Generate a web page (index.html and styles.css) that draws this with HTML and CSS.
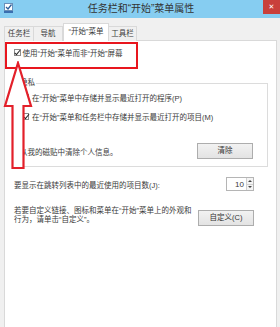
FILE: index.html
```html
<!DOCTYPE html>
<html lang="zh-CN">
<head>
<meta charset="utf-8">
<link rel="stylesheet" href="styles.css">
</head>
<body>
<div class="window">
  <div class="titlebar">
    <svg class="app-icon" width="9" height="10" viewBox="0 0 9 10">
      <rect x="0.5" y="0.5" width="8" height="7" fill="#fff" stroke="#6a8fb8"/>
      <path d="M2 4 L4 6 L7.5 1.5" fill="none" stroke="#2c5e9a" stroke-width="1.3"/>
      <rect x="0" y="8" width="9" height="2" fill="#3a6fb0"/>
    </svg>
    <div class="title">任务栏和“开始”菜单属性</div>
    <div class="close">✕</div>
  </div>
  <div class="content">
    <div class="tabs">
      <div class="tab t1">任务栏</div>
      <div class="tab t2">导航</div>
      <div class="tab active">“开始”菜单</div>
      <div class="tab t4">工具栏</div>
    </div>
    <div class="panel">
      <div class="highlight">
        <div class="check-row"><span class="cb checked"></span><span>使用“开始”菜单而非“开始”屏幕</span></div>
      </div>
      <fieldset class="group">
        <legend>隐私</legend>
        <div class="check-row item"><span class="cb"></span><span>在“开始”菜单中存储并显示最近打开的程序(P)</span></div>
        <div class="check-row item"><span class="cb checked"></span><span>在“开始”菜单和任务栏中存储并显示最近打开的项目(M)</span></div>
        <div class="clear-row">
          <span>从我的磁贴中清除个人信息。</span>
          <div class="btn">清除</div>
        </div>
      </fieldset>
      <div class="count-row">
        <span>要显示在跳转列表中的最近使用的项目数(J):</span>
        <div class="spinner">
          <span class="num">10</span>
          <span class="arrows"><span class="up"></span><span class="down"></span></span>
        </div>
      </div>
      <div class="custom-row">
        <p>若要自定义链接、图标和菜单在“开始”菜单上的外观和<br>行为，请单击“自定义”。</p>
        <div class="btn">自定义(C)</div>
      </div>
    </div>
  </div>
  <svg class="arrow" width="40" height="120" viewBox="0 0 40 120">
    <path d="M18 2 L31 45 L23.5 45 L23.5 107 L12.5 107 L12.5 45 L5 45 Z" fill="#fff" stroke="#e3202a" stroke-width="2.2" stroke-linejoin="miter"/>
  </svg>
</div>
</body>
</html>
```

FILE: styles.css
```css
* { box-sizing: border-box; }
html, body {
  margin: 0;
  padding: 0;
}
body {
  width: 280px;
  height: 327px;
  overflow: hidden;
  background: #f0f0f0;
  font-family: "Liberation Sans", "Noto Sans CJK SC", sans-serif;
  color: #3a3a3a;
  font-size: 7.5px;
}
.window {
  position: relative;
  height: 327px;
  display: flex;
  flex-direction: column;
}
.titlebar {
  height: 18px;
  background: #86cdf1;
  display: flex;
  align-items: center;
  position: relative;
  flex: none;
}
.app-icon {
  position: absolute;
  left: 4px;
  top: 3px;
}
.title {
  flex: 1;
  text-align: center;
  font-size: 10px;
  color: #333;
  padding-left: 2px;
  line-height: 16px;
}
.close {
  position: absolute;
  right: 0;
  top: 0;
  width: 17px;
  height: 14px;
  background: #c9403b;
  color: #fff;
  font-size: 7px;
  line-height: 14px;
  text-align: center;
  font-family: "DejaVu Sans", sans-serif;
}
.content {
  flex: 1;
  display: flex;
  flex-direction: column;
  padding: 5px 3px 0 4px;
}
.tabs {
  display: flex;
  align-items: flex-end;
  height: 18px;
  position: relative;
  z-index: 1;
  margin-bottom: -1px;
}
.tab {
  height: 15px;
  line-height: 14px;
  border: 1px solid #d9d9d9;
  border-bottom: none;
  background: #f0f0f0;
  padding: 0;
  font-size: 7.5px;
  text-align: center;
  white-space: nowrap;
  flex: none;
}
.t1 { width: 30px; }
.t2 { width: 30px; margin-left: -1px; }
.tab.active {
  width: 46px;
  height: 18px;
  line-height: 16px;
  background: #fff;
  margin-left: 0;
}
.t4 { width: 29px; margin-left: -1px; }
.panel {
  flex: 1;
  background: #fff;
  border: 1px solid #d9d9d9;
  border-bottom: none;
  display: flex;
  flex-direction: column;
}
.highlight {
  margin-top: 1px;
  width: 133px;
  height: 27px;
  border: 2.5px solid #e8161e;
  padding: 3px 0 0 6.5px;
}
.check-row {
  display: flex;
  align-items: center;
  height: 10px;
  white-space: nowrap;
}
.cb {
  width: 7px;
  height: 7px;
  border: 1px solid #8c8c8c;
  background: #fff;
  margin-right: 2px;
  position: relative;
  flex: none;
}
.cb.checked::after {
  content: "";
  position: absolute;
  left: 1.5px;
  top: -0.5px;
  width: 2px;
  height: 4.5px;
  border: solid #222;
  border-width: 0 1.2px 1.2px 0;
  transform: rotate(40deg);
}
.group {
  margin: 9px 8px 0 8px;
  padding: 4px 0 7px 8px;
  border: 1px solid #dcdcdc;
}
.group legend {
  padding: 0 1px;
  margin-left: -3px;
  font-size: 7.5px;
  line-height: 10px;
}
.item { margin-bottom: 9px; }
.item .cb { margin-right: 3px; }
.clear-row {
  display: flex;
  align-items: center;
  justify-content: space-between;
  margin-top: 22px;
  padding-right: 14px;
  margin-left: -2px;
}
.btn {
  width: 56px;
  height: 16px;
  border: 1px solid #adadad;
  background: linear-gradient(#f2f2f2, #e3e3e3);
  text-align: center;
  line-height: 14px;
  font-size: 7.5px;
  color: #333;
}
.count-row {
  display: flex;
  align-items: center;
  justify-content: space-between;
  margin: 10px 22px 0 9px;
  height: 14px;
}
.spinner {
  width: 28px;
  height: 14px;
  border: 1px solid #b5b5b5;
  display: flex;
  align-items: center;
  justify-content: flex-end;
  background: #fff;
}
.num {
  font-size: 8px;
  margin-right: 2px;
}
.arrows {
  width: 7px;
  height: 12px;
  display: flex;
  flex-direction: column;
  border-left: 1px solid #d0d0d0;
}
.arrows span {
  flex: 1;
  display: flex;
  align-items: center;
  justify-content: center;
  background: #f4f4f4;
}
.arrows .up { border-bottom: 1px solid #d0d0d0; }
.arrows .up::after {
  content: "";
  border-left: 2px solid transparent;
  border-right: 2px solid transparent;
  border-bottom: 2.5px solid #444;
}
.arrows .down::after {
  content: "";
  border-left: 2px solid transparent;
  border-right: 2px solid transparent;
  border-top: 2.5px solid #444;
}
.custom-row {
  display: flex;
  align-items: flex-start;
  justify-content: space-between;
  margin: 15px 22px 0 9px;
}
.custom-row p {
  margin: 0;
  line-height: 9px;
  white-space: nowrap;
  font-size: 7.5px;
}
.custom-row .btn {
  margin-top: 3.5px;
}
.arrow {
  position: absolute;
  left: 0;
  top: 61px;
}
```
